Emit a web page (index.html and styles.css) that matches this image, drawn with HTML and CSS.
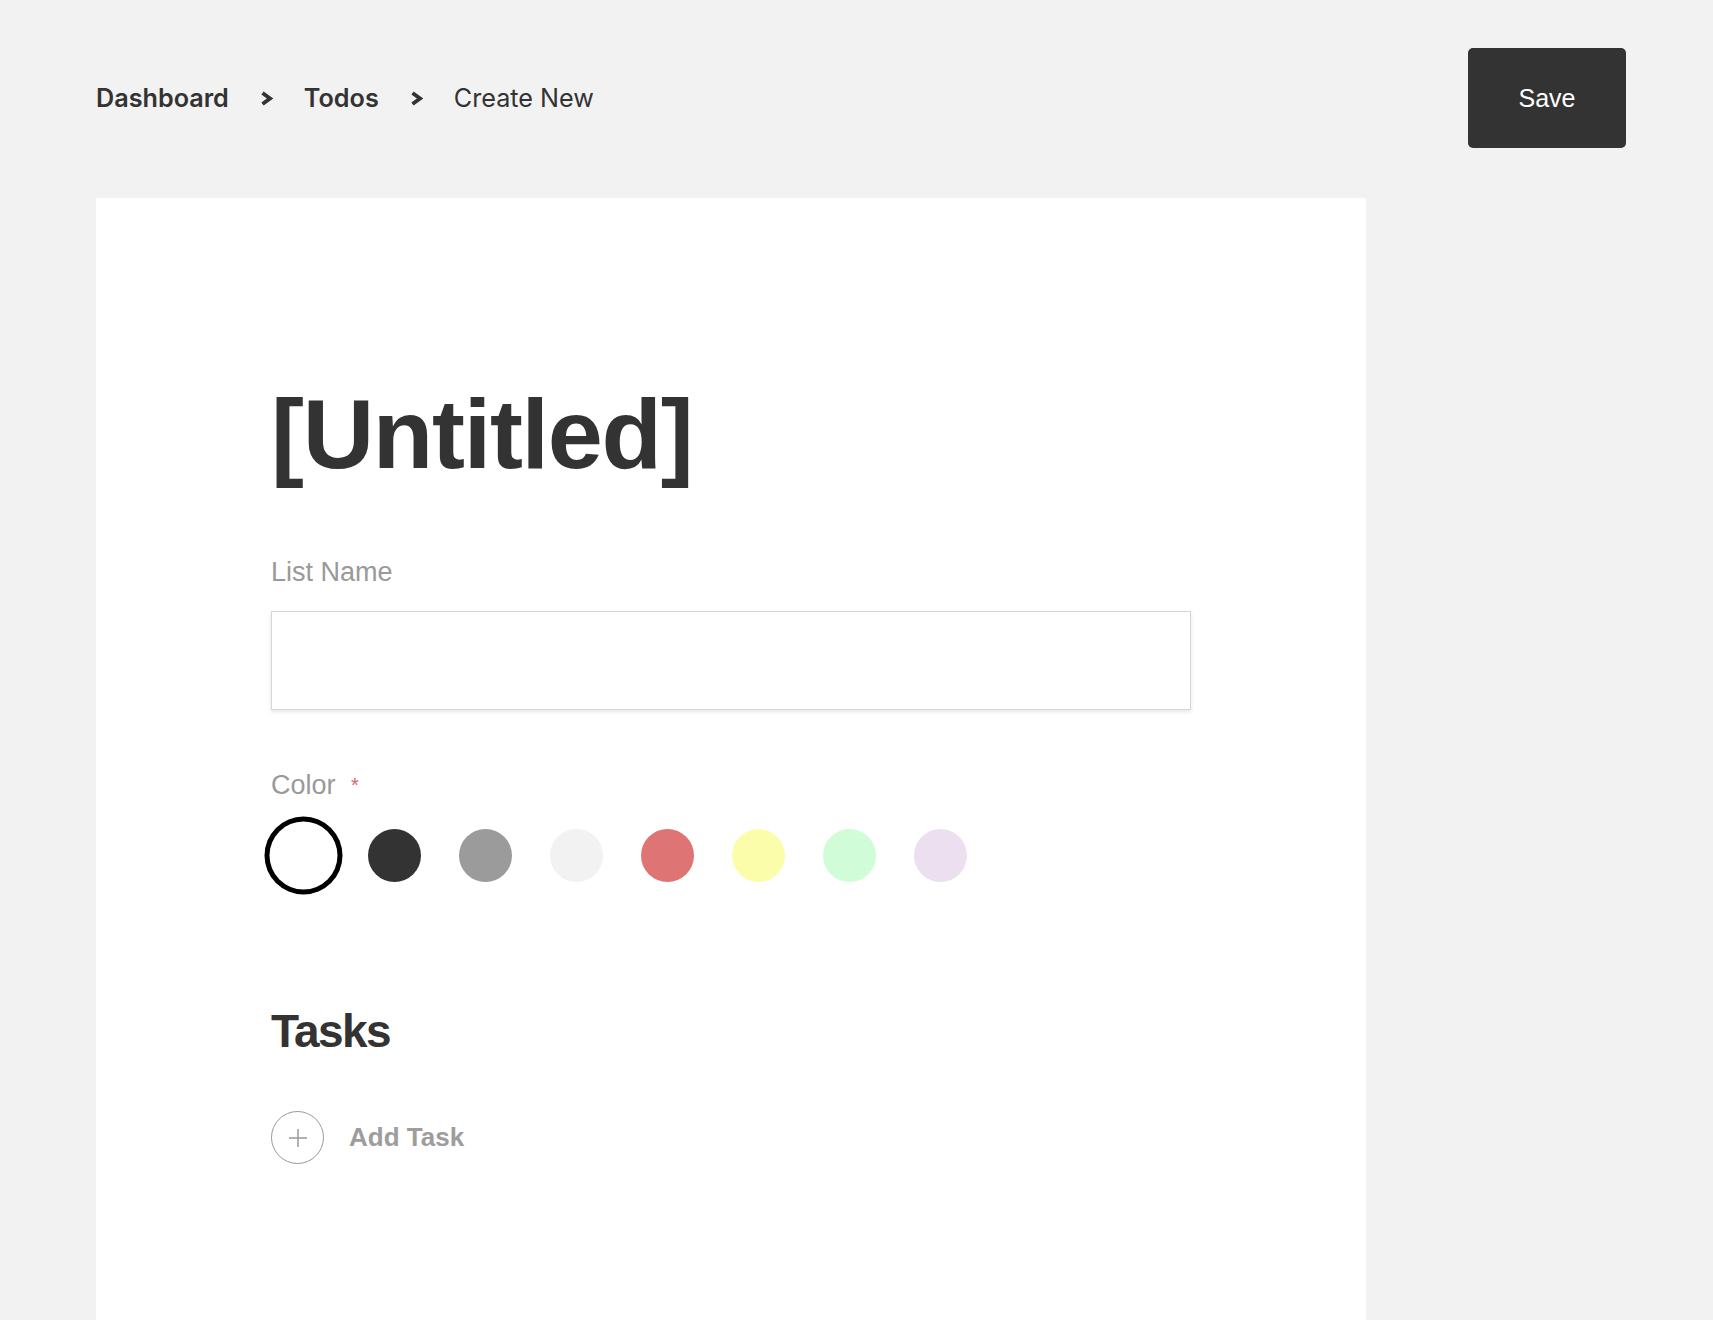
FILE: index.html
```html
<!DOCTYPE html>
<html lang="en">

<head>
    <meta charset="UTF-8">
    <meta name="viewport" content="width=device-width, initial-scale=1.0">
    <title>Create New Todo List</title>
    <link rel="stylesheet" href="styles.css">
</head>

<body>
    <header class="topbar">
        <nav class="breadcrumb">
            <a href="#" class="crumb">Dashboard</a>
            <svg class="chevron" width="13" height="15" viewBox="0 0 13 15">
                <polyline points="2.5,2 10,7.5 2.5,13" />
            </svg>
            <a href="#" class="crumb">Todos</a>
            <svg class="chevron" width="13" height="15" viewBox="0 0 13 15">
                <polyline points="2.5,2 10,7.5 2.5,13" />
            </svg>
            <span class="crumb current">Create New</span>
        </nav>
        <button class="save-btn">Save</button>
    </header>

    <main class="card">
        <h1 class="title">[Untitled]</h1>

        <label class="field-label" for="list-name">List Name</label>
        <input type="text" id="list-name" class="text-input">

        <div class="field-label color-label">Color <span class="required">*</span></div>
        <div class="swatches">
            <span class="swatch selected" style="background-color: #ffffff"></span>
            <span class="swatch" style="background-color: #333333"></span>
            <span class="swatch" style="background-color: #9b9b9b"></span>
            <span class="swatch" style="background-color: #f2f2f2"></span>
            <span class="swatch" style="background-color: #df7475"></span>
            <span class="swatch" style="background-color: #fbfdab"></span>
            <span class="swatch" style="background-color: #d0fdd8"></span>
            <span class="swatch" style="background-color: #ebdff0"></span>
        </div>

        <h2 class="section-title">Tasks</h2>
        <div class="add-task">
            <span class="add-icon">
                <svg width="20" height="20" viewBox="0 0 20 20">
                    <line x1="10" y1="1" x2="10" y2="19" />
                    <line x1="1" y1="10" x2="19" y2="10" />
                </svg>
            </span>
            <span class="add-text">Add Task</span>
        </div>
    </main>
</body>

</html>
```

FILE: styles.css
```css
body {
    margin: 0;
    padding: 0;
    background-color: #f2f2f2;
    font-family: "Liberation Sans", Arial, sans-serif;
    color: #333;
}

.topbar {
    display: flex;
    justify-content: space-between;
    align-items: center;
    padding: 48px 87px 0 96px;
}

.breadcrumb {
    display: flex;
    align-items: center;
    gap: 31px;
    font-family: Inter, "Liberation Sans", sans-serif;
    font-size: 25.2px;
}

.crumb {
    color: #333;
    text-decoration: none;
    font-weight: 600;
}

.crumb.current {
    font-weight: 400;
}

.chevron polyline {
    fill: none;
    stroke: #333;
    stroke-width: 3.8;
}

.save-btn {
    width: 158px;
    height: 100px;
    background-color: #333;
    color: #fff;
    border: none;
    border-radius: 5px;
    font-family: "Liberation Sans", Arial, sans-serif;
    font-size: 25px;
    cursor: pointer;
}

.card {
    margin: 50px 0 0 96px;
    width: 1270px;
    min-height: calc(100vh - 198px);
    box-sizing: border-box;
    background-color: #fff;
    padding: 186px 0 40px 175px;
}

.title {
    margin: 0;
    font-size: 99px;
    line-height: 99px;
    font-weight: 700;
    letter-spacing: -1.3px;
    color: #333;
}

.field-label {
    display: block;
    margin-top: 74px;
    font-size: 27px;
    line-height: 31px;
    color: #999;
}

.text-input {
    display: block;
    margin-top: 23px;
    width: 920px;
    height: 99px;
    box-sizing: border-box;
    border: 1px solid #d6d6d6;
    box-shadow: 0 2px 4px rgba(0, 0, 0, 0.1);
    outline: none;
    font-size: 24px;
    padding: 0 20px;
}

.color-label {
    margin-top: 60px;
}

.required {
    color: #d9656a;
    font-size: 20px;
    vertical-align: top;
    margin-left: 8px;
}

.swatches {
    display: flex;
    gap: 38px;
    margin-top: 28px;
    padding-left: 6px;
}

.swatch {
    width: 53px;
    height: 53px;
    border-radius: 50%;
    cursor: pointer;
}

.swatch.selected {
    box-shadow: 0 0 0 7.5px #fff, 0 0 0 12.5px #000;
}

.section-title {
    margin: 122px 0 0;
    font-size: 46px;
    line-height: 55px;
    font-weight: 700;
    letter-spacing: -1.6px;
    color: #333;
}

.add-task {
    display: flex;
    align-items: center;
    gap: 25px;
    margin-top: 52px;
    cursor: pointer;
}

.add-icon {
    width: 51px;
    height: 51px;
    border: 1.5px solid #999;
    border-radius: 50%;
    display: flex;
    align-items: center;
    justify-content: center;
}

.add-icon line {
    stroke: #999;
    stroke-width: 1.5;
}

.add-text {
    font-size: 26px;
    font-weight: 700;
    color: #9d9d9d;
}
```
